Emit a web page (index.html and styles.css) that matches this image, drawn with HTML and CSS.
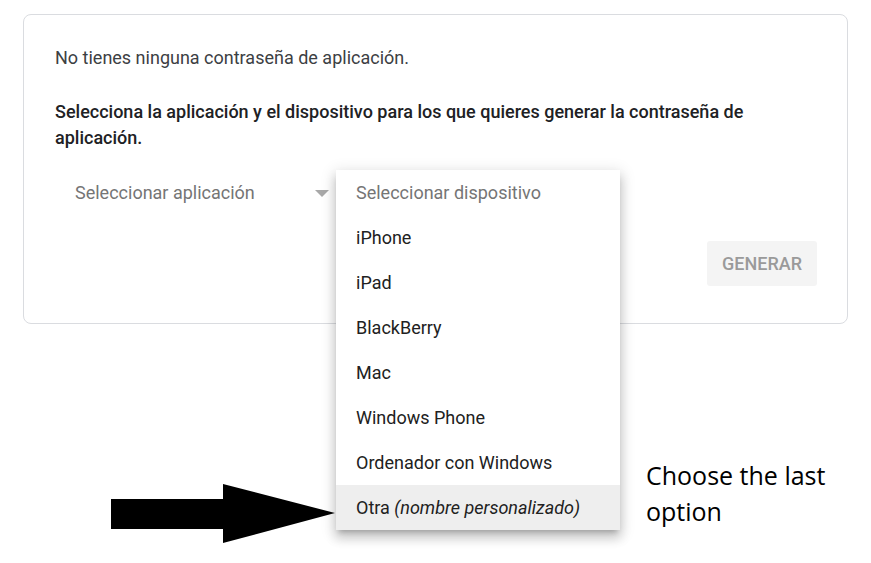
FILE: index.html
```html
<!DOCTYPE html>
<html lang="es">
<head>
<meta charset="utf-8">
<title>Contraseñas de aplicación</title>
<link rel="stylesheet" href="styles.css">
</head>
<body>
<div class="card">
  <p class="info">No tienes ninguna contraseña de aplicación.</p>
  <p class="lead">Selecciona la aplicación y el dispositivo para los que quieres generar la contraseña de aplicación.</p>
  <div class="selects">
    <div class="select app">
      <span class="select-label">Seleccionar aplicación</span>
      <span class="caret"></span>
    </div>
    <div class="select device"></div>
    <ul class="menu">
      <li class="placeholder">Seleccionar dispositivo</li>
      <li>iPhone</li>
      <li>iPad</li>
      <li>BlackBerry</li>
      <li>Mac</li>
      <li>Windows Phone</li>
      <li>Ordenador con Windows</li>
      <li class="active"><span>Otra&nbsp;<em>(nombre personalizado)</em></span></li>
    </ul>
  </div>
  <div class="actions">
    <button class="btn" disabled>Generar</button>
  </div>
</div>
<svg class="pointer" width="230" height="64" viewBox="0 0 230 64" aria-hidden="true">
  <polygon points="0,15 112,15 112,0 224,29 112,59 112,45 0,45" fill="#000"/>
</svg>
<div class="note">Choose the last<br>option</div>
</body>
</html>
```

FILE: styles.css
```css
html, body {
  margin: 0;
  background: #fff;
}
body {
  padding: 14px 23px;
  font-family: Roboto, "Liberation Sans", Arial, sans-serif;
  position: relative;
  height: 563px;
  box-sizing: border-box;
}
.card {
  border: 1px solid #dadce0;
  border-radius: 8px;
  padding: 31px 30px 37px 31px;
  height: 310px;
  box-sizing: border-box;
}
.info {
  margin: 0;
  font-size: 18px;
  line-height: 24px;
  color: #3c4043;
}
.lead {
  margin: 29px 0 0;
  font-size: 18px;
  line-height: 26px;
  font-weight: 500;
  color: #202124;
}
.selects {
  position: relative;
  display: flex;
  margin-top: 19px;
  height: 45px;
}
.select {
  display: flex;
  align-items: center;
  height: 45px;
  box-sizing: border-box;
}
.app {
  width: 281px;
  padding: 0 7px 0 20px;
  justify-content: space-between;
}
.select-label {
  font-size: 18px;
  color: #757575;
}
.caret {
  width: 0;
  height: 0;
  border-left: 7px solid transparent;
  border-right: 7px solid transparent;
  border-top: 7px solid #a8a8a8;
  margin-top: 1px;
}
.device {
  width: 284px;
}
.menu {
  position: absolute;
  top: 0;
  left: 281px;
  width: 284px;
  margin: 0;
  padding: 0;
  list-style: none;
  background: #fff;
  box-shadow: 0 5px 5px -3px rgba(0,0,0,.2), 0 8px 10px 1px rgba(0,0,0,.14), 0 3px 14px 2px rgba(0,0,0,.12);
  z-index: 2;
}
.menu li {
  height: 45px;
  display: flex;
  align-items: center;
  padding-left: 20px;
  font-size: 18px;
  color: #212121;
}
.menu li.placeholder {
  color: #757575;
}
.menu li.active {
  background: #eeeeee;
}
.menu em {
  font-style: italic;
}
.actions {
  display: flex;
  justify-content: flex-end;
  margin-top: 26px;
}
.btn {
  height: 45px;
  width: 110px;
  border: 0;
  border-radius: 3px;
  background: #f4f4f4;
  color: #9a9a9a;
  font-family: Roboto, "Liberation Sans", Arial, sans-serif;
  font-size: 18px;
  font-weight: 500;
  text-transform: uppercase;
  padding: 0;
}
.pointer {
  position: absolute;
  left: 111px;
  top: 484px;
  z-index: 3;
}
.note {
  position: absolute;
  left: 646px;
  top: 457px;
  font-family: "Open Sans", "Noto Sans", sans-serif;
  font-size: 25px;
  line-height: 36px;
  color: #000;
}
```
